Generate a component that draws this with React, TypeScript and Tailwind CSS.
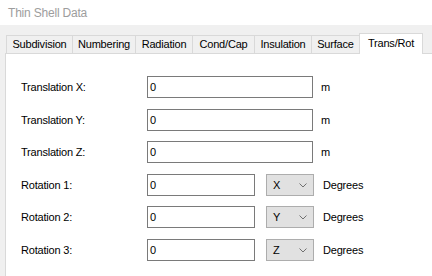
import React from 'react';

const tabs = [
  { label: 'Subdivision', w: 'w-[67px]' },
  { label: 'Numbering', w: 'w-[64px]' },
  { label: 'Radiation', w: 'w-[58px]' },
  { label: 'Cond/Cap', w: 'w-[63px]' },
  { label: 'Insulation', w: 'w-[58px]' },
  { label: 'Surface', w: 'w-[49px]' },
];

const translations = [
  { label: 'Translation X:', mt: 'mt-[22px]' },
  { label: 'Translation Y:', mt: 'mt-[11px]' },
  { label: 'Translation Z:', mt: 'mt-[10px]' },
];

const rotations = [
  { label: 'Rotation 1:', axis: 'X', mt: 'mt-[11px]' },
  { label: 'Rotation 2:', axis: 'Y', mt: 'mt-[10px]' },
  { label: 'Rotation 3:', axis: 'Z', mt: 'mt-[11px]' },
];

const Chevron = () => (
  <svg width="8" height="5" viewBox="0 0 8 5" className="text-[#707070]">
    <polyline points="0.5,0.5 4,4 7.5,0.5" fill="none" stroke="currentColor" strokeWidth="1" />
  </svg>
);

const TextBox = ({ w }: { w: string }) => (
  <div className={`${w} h-[22px] border border-[#7a7a7a] bg-white flex items-center pl-[2px] text-black`}>0</div>
);

export default function App() {
  return (
    <div
      className="w-[432px] h-[276px] overflow-hidden flex flex-col text-[11px] tracking-[-0.2px] text-black bg-[#f0f0f0]"
      style={{ fontFamily: '"Liberation Sans", Arial, sans-serif' }}
    >
      {/* window title */}
      <div className="h-[25px] shrink-0 bg-white flex items-center pl-[8px] text-[12px] text-[#9d9d9d]">
        Thin Shell Data
      </div>

      <div className="flex-1 flex flex-col pl-[5px]">
        {/* tab strip */}
        <div className="h-[28px] shrink-0 flex items-end pl-[1px]">
          {tabs.map((t, i) => (
            <div
              key={t.label}
              className={`${t.w} h-[18px] ${i > 0 ? '-ml-px' : ''} border border-b-0 border-[#d9d9d9] bg-[#f0f0f0] flex items-center justify-center`}
            >
              {t.label}
            </div>
          ))}
          <div className="relative z-10 -ml-px w-[64px] h-[21px] -mb-px border border-b-0 border-[#d9d9d9] bg-white flex items-center justify-center pb-[2px]">
            Trans/Rot
          </div>
        </div>

        {/* tab page */}
        <div className="flex-1 bg-white border-l border-t border-[#d9d9d9] pl-[15px] flex flex-col">
          {translations.map((r) => (
            <div key={r.label} className={`${r.mt} flex items-center`}>
              <div className="w-[126px]">{r.label}</div>
              <TextBox w="w-[166px]" />
              <div className="ml-[8px]">m</div>
            </div>
          ))}
          {rotations.map((r) => (
            <div key={r.label} className={`${r.mt} flex items-center`}>
              <div className="w-[126px]">{r.label}</div>
              <TextBox w="w-[108px]" />
              <div className="ml-[11px] w-[48px] h-[22px] border border-[#adadad] bg-[#e1e1e1] flex items-center justify-between pl-[6px] pr-[6px]">
                <span>{r.axis}</span>
                <Chevron />
              </div>
              <div className="ml-[9px]">Degrees</div>
            </div>
          ))}
        </div>
      </div>
    </div>
  );
}
